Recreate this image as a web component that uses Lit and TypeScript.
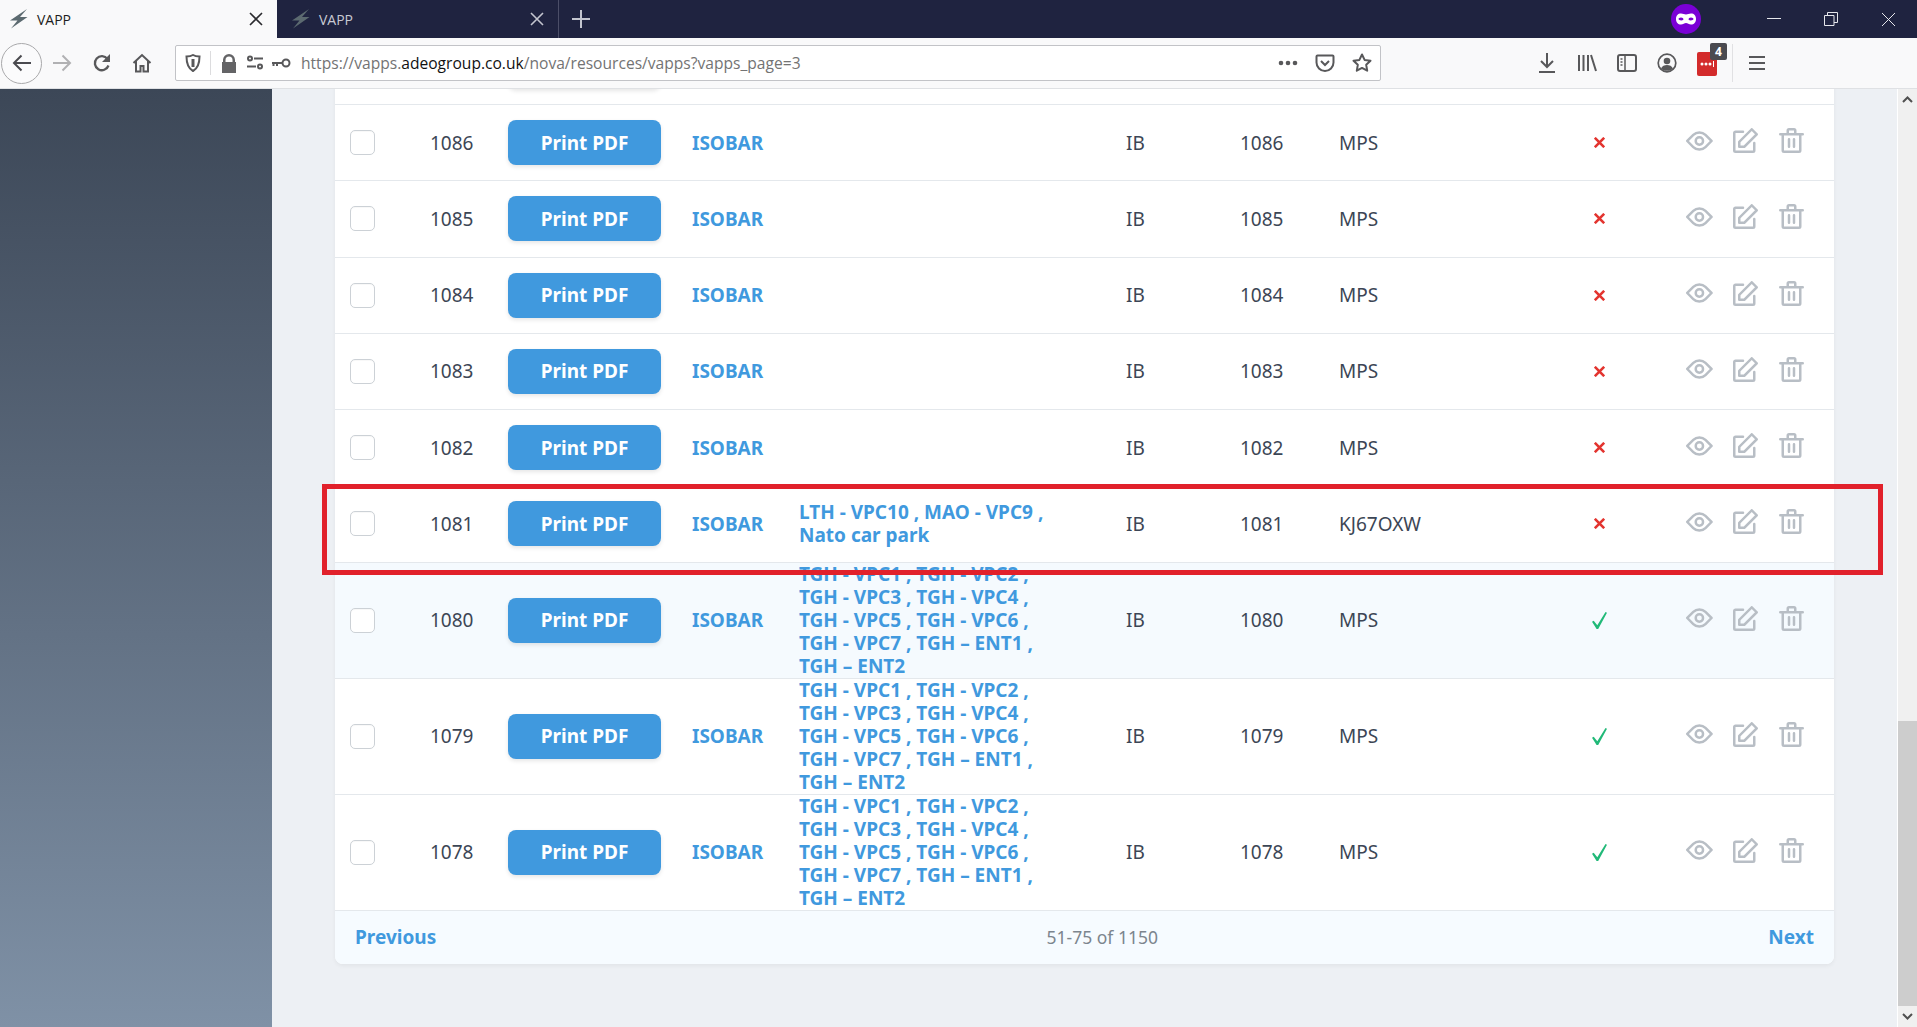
import { LitElement, html, css, svg } from 'lit'
import { customElement } from 'lit/decorators.js'

interface Row {
  id: number
  zones: string[]
  plate: string
  ok: boolean
  tall?: boolean
  hover?: boolean
}

const TGH = [
  'TGH - VPC1 , TGH - VPC2 ,',
  'TGH - VPC3 , TGH - VPC4 ,',
  'TGH - VPC5 , TGH - VPC6 ,',
  'TGH - VPC7 , TGH – ENT1 ,',
  'TGH – ENT2',
]

const rows: Row[] = [
  { id: 1086, zones: [], plate: 'MPS', ok: false },
  { id: 1085, zones: [], plate: 'MPS', ok: false },
  { id: 1084, zones: [], plate: 'MPS', ok: false },
  { id: 1083, zones: [], plate: 'MPS', ok: false },
  { id: 1082, zones: [], plate: 'MPS', ok: false },
  { id: 1081, zones: ['LTH - VPC10 , MAO - VPC9 ,', 'Nato car park'], plate: 'KJ67OXW', ok: false },
  { id: 1080, zones: TGH, plate: 'MPS', ok: true, tall: true, hover: true },
  { id: 1079, zones: TGH, plate: 'MPS', ok: true, tall: true },
  { id: 1078, zones: TGH, plate: 'MPS', ok: true, tall: true },
]

const bolt = svg`<path d="M18 0 1 11.5h7.5L2 19.5 18.5 8H11z"/>`

const tbIcon = (w: number, h: number, body: unknown) => html`
  <svg class="tb" width=${w} height=${h} viewBox="0 0 ${w} ${h}" fill="none" stroke="#58585a" stroke-width="2">${body}</svg>
`

@customElement('app-root')
export class AppRoot extends LitElement {
  static styles = css`
    :host {
      display: block;
      height: 1027px;
      overflow: hidden;
      font-family: 'Noto Sans', sans-serif;
      position: relative;
    }

    /* browser chrome */
    .tabs {
      height: 38px;
      background: #1f2340;
      display: flex;
      align-items: stretch;
      font-family: 'Open Sans', sans-serif;
      font-size: 14px;
    }
    .tab {
      display: flex;
      align-items: center;
      padding: 0 14px 0 9px;
      color: #c8cad3;
      box-sizing: border-box;
    }
    .tab.active {
      width: 277px;
      background: #f9f9fa;
      color: #1d1d20;
    }
    .tab.other {
      width: 282px;
      padding-left: 14px;
      border-right: 1px solid #4b4e68;
    }
    .tab svg.fav {
      margin-right: 9px;
      fill: #5c6a70;
    }
    .tab .title {
      flex: 1;
    }
    .plus {
      margin-left: 13px;
      align-self: center;
      display: flex;
    }
    .win {
      margin-left: auto;
      display: flex;
      align-items: center;
    }
    .mask {
      margin-right: 44px;
      display: flex;
    }
    .win-btn {
      width: 57px;
      display: flex;
      justify-content: center;
    }
    .win-btn:last-child {
      width: 58px;
    }

    .toolbar {
      height: 50px;
      background: #f9f9fa;
      border-bottom: 1px solid #dfe1e4;
      display: flex;
      align-items: center;
    }
    .back {
      width: 41px;
      height: 41px;
      margin-left: 1px;
      border: 1px solid #a9a9ab;
      border-radius: 50%;
      background: #fbfbfc;
      display: flex;
      align-items: center;
      justify-content: center;
      box-sizing: border-box;
      flex: none;
    }
    .nav {
      width: 40px;
      display: flex;
      justify-content: center;
      flex: none;
    }
    .url {
      margin-left: 13px;
      width: 1206px;
      height: 36px;
      flex: none;
      box-sizing: border-box;
      background: #fff;
      border: 1px solid #c2c3c7;
      border-radius: 2px;
      display: flex;
      align-items: center;
      padding-left: 9px;
      font-family: 'Open Sans', sans-serif;
      font-size: 15.6px;
      color: #737373;
    }
    .url svg {
      flex: none;
    }
    .url .sep {
      width: 1px;
      height: 24px;
      background: #dcdcde;
      margin: 0 10px 0 9px;
    }
    .url .addr {
      margin-left: 10px;
      white-space: nowrap;
      flex: 1;
    }
    .url b {
      font-weight: 400;
      color: #111;
    }
    .url .end {
      display: flex;
      align-items: center;
      gap: 17px;
      padding-right: 8px;
    }
    .right-tools {
      margin-left: 146px;
      display: flex;
      align-items: center;
    }
    .right-tools .nav {
      width: 40px;
    }
    .pass {
      position: relative;
      width: 20px;
      height: 24px;
      background: #d32b2b;
      border-radius: 2px;
      display: flex;
      align-items: center;
      justify-content: center;
      margin-top: 2px;
    }
    .badge {
      position: absolute;
      top: -9px;
      left: 13px;
      width: 17px;
      height: 17px;
      background: #4a4a4f;
      color: #fff;
      border-radius: 2px;
      font: 700 12px/17px 'Noto Sans', sans-serif;
      text-align: center;
    }
    .vsep {
      width: 1px;
      height: 38px;
      background: #e1e1e3;
      margin-left: 5px;
    }
    .burger {
      margin-left: 16px;
      display: flex;
    }

    /* page */
    .page {
      display: flex;
      height: 938px;
    }
    .sidebar {
      width: 272px;
      flex: none;
      background: linear-gradient(#3c4757, #7f91a6);
    }
    .main {
      flex: 1;
      background: #edf0f4;
      overflow: hidden;
      padding: 0 63px 0 63px;
    }
    .card {
      margin-top: -60.25px;
      background: #fff;
      border-radius: 8px;
      box-shadow: 0 2px 4px rgba(0, 0, 0, 0.05);
    }
    .row {
      display: grid;
      grid-template-columns: 95px 78px 184px 107px 327px 114px 99px 230px 60px 1fr;
      align-items: center;
      height: 76.25px;
      box-sizing: border-box;
      border-bottom: 1px solid #e4e8ec;
      font-size: 19px;
      color: #3c4655;
    }
    .row.tall {
      height: 116px;
    }
    .row.hover {
      background: #f5fafe;
    }
    .check {
      margin-left: 15px;
      width: 25px;
      height: 25px;
      box-sizing: border-box;
      border: 1px solid #ccd1d6;
      border-radius: 5px;
      background: #fff;
      box-shadow: inset 0 1px 1px rgba(0, 0, 0, 0.03);
    }
    .pdf {
      width: 153px;
      height: 45px;
      border-radius: 8px;
      background: #4099de;
      color: #fff;
      font-size: 19px;
      font-weight: 700;
      display: flex;
      align-items: center;
      justify-content: center;
      box-shadow: 0 2px 4px rgba(0, 0, 0, 0.1);
    }
    .link {
      color: #4099de;
      font-weight: 700;
    }
    .zones {
      line-height: 23px;
      white-space: nowrap;
    }
    .status {
      display: flex;
      justify-content: center;
    }
    .actions {
      display: flex;
      align-items: center;
      padding: 0 0 4px 57px;
    }
    .actions svg {
      fill: #b8bec5;
      flex: none;
    }
    .actions .edit {
      margin: 0 21px 0 20px;
    }
    .footer {
      height: 53px;
      background: #f6fbff;
      border-radius: 0 0 8px 8px;
      display: flex;
      align-items: center;
      justify-content: space-between;
      padding: 0 20px;
      font-size: 19px;
    }
    .footer .count {
      color: #7c858e;
      font-size: 17.5px;
    }

    .scrollbar {
      width: 20px;
      flex: none;
      border-left: 1px solid #fff;
      box-sizing: border-box;
      background: #f0f0f0;
      display: flex;
      flex-direction: column;
      align-items: stretch;
    }
    .scroll-btn {
      height: 21px;
      display: flex;
      align-items: center;
      justify-content: center;
      flex: none;
    }
    .gap {
      flex: 1;
    }
    .thumb {
      height: 285px;
      background: #cdcdcd;
      flex: none;
    }

    /* annotation drawn on the screenshot */
    .marker {
      position: absolute;
      left: 322px;
      top: 484px;
      width: 1561px;
      height: 91px;
      box-sizing: border-box;
      border: 5px solid #e1212b;
      pointer-events: none;
    }
  `

  private tabs() {
    return html`
      <div class="tabs">
        <div class="tab active">
          <svg class="fav" width="19" height="20" viewBox="0 0 19 20">${bolt}</svg>
          <span class="title">VAPP</span>
          <svg width="14" height="14" viewBox="0 0 14 14" stroke="#2a2a2e" stroke-width="1.6"><path d="M1 1l12 12M13 1 1 13"/></svg>
        </div>
        <div class="tab other">
          <svg class="fav" width="19" height="20" viewBox="0 0 19 20">${bolt}</svg>
          <span class="title">VAPP</span>
          <svg width="14" height="14" viewBox="0 0 14 14" stroke="#c3c5cf" stroke-width="1.6"><path d="M1 1l12 12M13 1 1 13"/></svg>
        </div>
        <div class="plus">
          <svg width="18" height="18" viewBox="0 0 18 18" stroke="#c3c5cf" stroke-width="2"><path d="M9 0v18M0 9h18"/></svg>
        </div>
        <div class="win">
          <div class="mask">
            <svg width="30" height="30" viewBox="0 0 30 30">
              <circle cx="15" cy="15" r="15" fill="#7a00d6"/>
              <path fill="#fff" fill-rule="evenodd" d="M10 9.5c2 0 3.500 1 5 1s3-1 5-1c3 0 5 2 5 5.500s-2 5.500-5 5.500c-2 0-3.500-1.500-5-1.500s-3 1.500-5 1.500c-3 0-5-2-5-5.500s2-5.500 5-5.500zm0 4c-1.500 0-2.500.8-2.500 1.500s1.200 1.500 2.800 1.500 2.200-.8 2.200-1.200c0-.8-1-1.800-2.500-1.800zm10 0c-1.500 0-2.500 1-2.500 1.800 0 .4.600 1.200 2.200 1.200s2.800-.8 2.800-1.500-1-1.500-2.500-1.500z"/>
            </svg>
          </div>
          <div class="win-btn">
            <svg width="14" height="14" viewBox="0 0 14 14" stroke="#e6e7ec"><path d="M0 6.500h14"/></svg>
          </div>
          <div class="win-btn">
            <svg width="14" height="14" viewBox="0 0 14 14" fill="none" stroke="#e6e7ec"><path d="M.5 3.500h9.500v10H.5zM3.500 3.500v-3h10v10h-3.500"/></svg>
          </div>
          <div class="win-btn">
            <svg width="15" height="15" viewBox="0 0 15 15" stroke="#e6e7ec"><path d="M1 1l13 13M14 1 1 14"/></svg>
          </div>
        </div>
      </div>
    `
  }

  private toolbar() {
    return html`
      <div class="toolbar">
        <div class="back">
          <svg width="20" height="18" viewBox="0 0 20 18" fill="none" stroke="#4a4a4f" stroke-width="2"><path d="M19 9H2M9.500 1.500 2 9l7.500 7.500"/></svg>
        </div>
        <div class="nav">
          ${tbIcon(20, 18, svg`<path stroke="#b1b1b3" d="M1 9h17M10.500 1.500 18 9l-7.500 7.500"/>`)}
        </div>
        <div class="nav">
          ${tbIcon(20, 20, svg`<path stroke-width="2.300" d="M16.500 12.500a7 7 0 1 1-1-6.500"/><path fill="#58585a" stroke="none" d="M18 1v8h-8z"/>`)}
        </div>
        <div class="nav">
          ${tbIcon(20, 20, svg`<path d="M1.500 10 10 2l8.500 8M4 8v10.500h4.500V13h3v5.500H16V8"/>`)}
        </div>
        <div class="url">
          <svg width="16" height="18" viewBox="0 0 16 18" fill="none" stroke="#58585a" stroke-width="2"><path d="M8 1c2 1.200 4 1.500 6.500 1.500 0 6-1 11.500-6.500 14.500C2.500 14 1.500 8.500 1.500 2.500 4 2.500 6 2.200 8 1z"/><path stroke-width="3" d="M8 5v8"/></svg>
          <span class="sep"></span>
          <svg width="16" height="19" viewBox="0 0 16 19" fill="#646466"><path d="M2 8V6a6 6 0 0 1 12 0v2h1v11H1V8zm2.500 0h7V6a3.500 3.500 0 0 0-7 0z"/></svg>
          <svg style="margin-left:9px" width="18" height="16" viewBox="0 0 18 16" fill="none" stroke="#58585a" stroke-width="2"><circle cx="4" cy="3.500" r="2"/><path d="M8 3.500h9M1 11.500h9"/><circle cx="14" cy="11.500" r="2"/></svg>
          <svg style="margin-left:7px" width="20" height="12" viewBox="0 0 20 12" fill="none" stroke="#58585a" stroke-width="2"><circle cx="15" cy="6" r="3.500"/><path d="M11 6H1M2.500 6v3M6 6v3"/></svg>
          <span class="addr">https://vapps.<b>adeogroup.co.uk</b>/nova/resources/vapps?vapps_page=3</span>
          <div class="end">
            <svg width="20" height="6" viewBox="0 0 20 6" fill="#58585a"><circle cx="3" cy="3" r="2.300"/><circle cx="10" cy="3" r="2.300"/><circle cx="17" cy="3" r="2.300"/></svg>
            <svg width="20" height="19" viewBox="0 0 20 19" fill="none" stroke="#58585a" stroke-width="2"><path d="M2.500 1.500h15c.6 0 1 .4 1 1v6a8.500 8.500 0 0 1-17 0v-6c0-.6.400-1 1-1z"/><path d="M6 7l4 4 4-4"/></svg>
            <svg width="20" height="20" viewBox="0 0 20 20" fill="none" stroke="#58585a" stroke-width="2" stroke-linejoin="round"><path d="M10 1.500l2.600 5.400 5.900.8-4.300 4.100 1 5.900-5.200-2.800-5.200 2.800 1-5.900-4.300-4.100 5.900-.8z"/></svg>
          </div>
        </div>
        <div class="right-tools">
          <div class="nav">
            ${tbIcon(18, 20, svg`<path d="M9 0v13M3 8l6 6 6-6M1 19h16"/>`)}
          </div>
          <div class="nav">
            ${tbIcon(20, 18, svg`<path d="M2 1v16M6.500 1v16M11 1v16M14 1l5 16"/>`)}
          </div>
          <div class="nav">
            ${tbIcon(20, 18, svg`<rect x="1" y="1" width="18" height="16" rx="2"/><path d="M8 1v16M3.500 5h2M3.500 8h2M3.500 11h2" stroke-width="1.500"/>`)}
          </div>
          <div class="nav">
            ${tbIcon(20, 20, svg`<circle cx="10" cy="10" r="8.800" stroke-width="1.700"/><circle cx="10" cy="8" r="3.300" fill="#58585a" stroke="none"/><path fill="#58585a" stroke="none" d="M4 15.500c1-2.500 3.500-3.500 6-3.500s5 1 6 3.500c-1.500 1.500-3.500 2.300-6 2.300s-4.500-.8-6-2.300z"/>`)}
          </div>
          <div class="nav">
            <div class="pass">
              <svg width="14" height="6" viewBox="0 0 14 6" fill="#fff"><circle cx="2" cy="3" r="1.500"/><circle cx="6" cy="3" r="1.500"/><circle cx="10" cy="3" r="1.500"/><rect x="13" width="1" height="6"/></svg>
              <span class="badge">4</span>
            </div>
          </div>
          <span class="vsep"></span>
          <div class="burger">
            ${tbIcon(16, 16, svg`<path stroke-width="2.200" d="M0 2h16M0 8h16M0 14h16"/>`)}
          </div>
        </div>
      </div>
    `
  }

  private status(ok: boolean) {
    return ok
      ? html`<svg width="15" height="17" viewBox="0 0 15 17" fill="#21b978"><path d="M13.500 0 15 .8 6.200 17H4.600L0 9.800l1.700-1 3.600 4.500z"/></svg>`
      : html`<svg width="11" height="11" viewBox="0 0 11 11" stroke="#e3342f" stroke-width="2.600"><path d="M.8.8l9.400 9.400M10.200.8.800 10.200"/></svg>`
  }

  private row(r: Row) {
    return html`
      <div class="row ${r.tall ? 'tall' : ''} ${r.hover ? 'hover' : ''}">
        <div class="check"></div>
        <div>${r.id}</div>
        <div class="pdf">Print PDF</div>
        <div class="link">ISOBAR</div>
        <div class="link zones">${r.zones.map((z) => html`<div>${z}</div>`)}</div>
        <div>IB</div>
        <div>${r.id}</div>
        <div>${r.plate}</div>
        <div class="status">${this.status(r.ok)}</div>
        <div class="actions">
          <svg width="27" height="20" viewBox="0 0 22 16"><path d="M16.560 13.660a8 8 0 0 1-11.320 0L.3 8.700a1 1 0 0 1 0-1.420l4.950-4.950a8 8 0 0 1 11.320 0l4.950 4.950a1 1 0 0 1 0 1.420l-4.950 4.950-.01.01zm-9.900-1.420a6 6 0 0 0 8.480 0L19.380 8l-4.240-4.240a6 6 0 0 0-8.480 0L2.400 8l4.240 4.240h.02zM10.900 12a4 4 0 1 1 0-8 4 4 0 0 1 0 8zm0-2a2 2 0 1 0 0-4 2 2 0 0 0 0 4z"/></svg>
          <svg class="edit" width="25" height="25" viewBox="0 0 20 20"><path d="M4.300 10.300l10-10a1 1 0 0 1 1.400 0l4 4a1 1 0 0 1 0 1.400l-10 10a1 1 0 0 1-.7.3H5a1 1 0 0 1-1-1v-4a1 1 0 0 1 .3-.7zM6 14h2.590l9-9L15 2.410l-9 9V14zm10-2a1 1 0 0 1 2 0v6a2 2 0 0 1-2 2H2a2 2 0 0 1-2-2V4c0-1.100.9-2 2-2h6a1 1 0 1 1 0 2H2v14h14v-6z"/></svg>
          <svg width="25" height="25" viewBox="0 0 20 20"><path d="M6 4V2a2 2 0 0 1 2-2h4a2 2 0 0 1 2 2v2h5a1 1 0 0 1 0 2h-1v12a2 2 0 0 1-2 2H4a2 2 0 0 1-2-2V6H1a1 1 0 1 1 0-2h5zM4 6v12h12V6H4zm8-2V2H8v2h4zM8 8a1 1 0 0 1 1 1v6a1 1 0 0 1-2 0V9a1 1 0 0 1 1-1zm4 0a1 1 0 0 1 1 1v6a1 1 0 0 1-2 0V9a1 1 0 0 1 1-1z"/></svg>
        </div>
      </div>
    `
  }

  render() {
    return html`
      ${this.tabs()} ${this.toolbar()}
      <div class="page">
        <div class="sidebar"></div>
        <div class="main">
          <div class="card">
            ${this.row({ id: 1087, zones: [], plate: 'MPS', ok: false })}
            ${rows.map((r) => this.row(r))}
            <div class="footer">
              <span class="link">Previous</span>
              <span class="count">51-75 of 1150</span>
              <span class="link">Next</span>
            </div>
          </div>
        </div>
        <div class="scrollbar">
          <div class="scroll-btn">
            <svg width="11" height="7" viewBox="0 0 11 7" fill="none" stroke="#505050" stroke-width="2"><path d="M1 6l4.500-4.500L10 6"/></svg>
          </div>
          <div class="gap"></div>
          <div class="thumb"></div>
          <div class="scroll-btn">
            <svg width="11" height="7" viewBox="0 0 11 7" fill="none" stroke="#505050" stroke-width="2"><path d="M1 1l4.500 4.500L10 1"/></svg>
          </div>
        </div>
      </div>
      <div class="marker"></div>
    `
  }
}
